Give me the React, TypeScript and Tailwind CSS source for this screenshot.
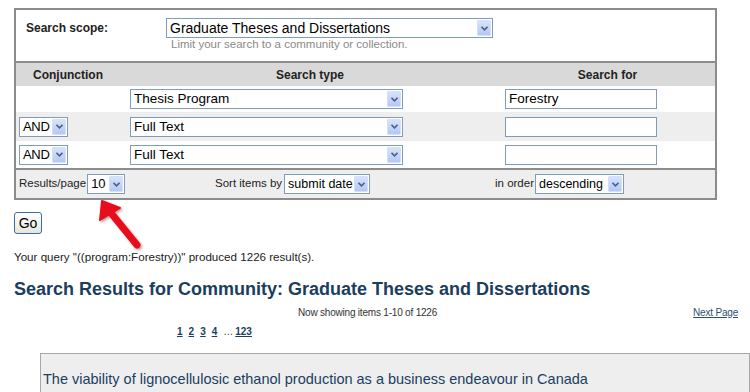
import React from "react";

const font = { fontFamily: '"Liberation Sans", Arial, sans-serif' };

function Select({
  value,
  className,
  text = "text-[13.5px]",
}: {
  value: string;
  className: string;
  text?: string;
}) {
  return (
    <div
      className={`flex h-[20px] items-stretch border border-[#7f9db9] bg-white ${className}`}
    >
      <span
        className={`min-w-0 flex-1 overflow-hidden whitespace-nowrap pl-[3px] leading-[18px] text-black ${text}`}
      >
        {value}
      </span>
      <span className="m-[1px] flex w-[14px] shrink-0 items-center justify-center rounded-[1px] border border-[#d5e0f8] bg-gradient-to-b from-[#d7e3fd] to-[#b4c8f5]">
        <svg width="7" height="5" viewBox="0 0 7 5">
          <path d="M0.5 0.8 L3.5 3.8 L6.5 0.8" fill="none" stroke="#4d6185" strokeWidth="1.6" />
        </svg>
      </span>
    </div>
  );
}

function Input({ value = "" }: { value?: string }) {
  return (
    <div className="h-[20px] w-[152px] border border-[#7f9db9] bg-white pl-[3px] text-[13.5px] leading-[18px] text-black">
      {value}
    </div>
  );
}

export default function App() {
  return (
    <div className="relative h-[392px] w-[750px] overflow-hidden bg-white" style={font}>
      <div className="pl-[14px] pt-[8px]">
        {/* search form */}
        <div className="w-[703px] border-2 border-[#8c8c8c]">
          <div className="flex h-[51px] items-start">
            <span className="w-[150px] pl-[10px] pt-[9px] text-[12px] font-bold text-[#222]">
              Search scope:
            </span>
            <div className="pt-[8px]">
              <Select value="Graduate Theses and Dissertations" className="w-[327px]" text="text-[14px]" />
              <p className="pl-[5px] text-[11.5px] leading-[13px] text-[#8a8a8a]">
                Limit your search to a community or collection.
              </p>
            </div>
          </div>
          <div className="flex h-[25px] items-center border-t-2 border-[#8c8c8c] bg-[#d9d9d9] text-[12px] font-bold text-[#222]">
            <span className="w-[104px] text-center">Conjunction</span>
            <span className="w-[380px] text-center">Search type</span>
            <span className="flex-1 text-center">Search for</span>
          </div>
          <div className="flex h-[26px] items-center bg-white">
            <span className="w-[114px]" />
            <Select value="Thesis Program" className="w-[273px]" />
            <span className="w-[102px]" />
            <Input value="Forestry" />
          </div>
          <div className="flex h-[29px] items-center bg-[#eeeeee]">
            <span className="w-[114px] pl-[3px]">
              <Select value="AND" className="w-[49px]" text="text-[13px] tracking-[-0.3px]" />
            </span>
            <Select value="Full Text" className="w-[273px]" />
            <span className="w-[102px]" />
            <Input />
          </div>
          <div className="flex h-[27px] items-center bg-white">
            <span className="w-[114px] pl-[3px]">
              <Select value="AND" className="w-[49px]" text="text-[13px] tracking-[-0.3px]" />
            </span>
            <Select value="Full Text" className="w-[273px]" />
            <span className="w-[102px]" />
            <Input />
          </div>
          <div className="flex h-[30px] items-center border-t-2 border-[#8c8c8c] bg-[#eeeeee] text-[11.5px] text-[#222]">
            <span className="flex w-[199px] items-center pl-[3px]">
              Results/page
              <Select value="10" className="ml-[1px] w-[38px]" text="text-[13px]" />
            </span>
            <span className="flex w-[280px] items-center">
              Sort items by
              <Select value="submit date" className="ml-[2px] w-[86px]" text="text-[12.5px]" />
            </span>
            <span className="flex items-center">
              in order
              <Select value="descending" className="ml-[1px] w-[89px]" text="text-[12.5px]" />
            </span>
          </div>
        </div>

        <button className="mt-[12px] h-[22px] w-[28px] rounded-[3px] border border-[#3b6e9e] bg-gradient-to-b from-white to-[#e6e6e0] text-[14px] leading-[18px] text-black">
          Go
        </button>

        <p className="mt-[15px] text-[11.6px] leading-[13px] text-[#222]">
          Your query "((program:Forestry))" produced 1226 result(s).
        </p>

        <h1 className="mt-[16px] text-[18px] font-bold leading-[20px] text-[#1b3e5e]">
          Search Results for Community: Graduate Theses and Dissertations
        </h1>
      </div>

      <div className="mt-[7px] flex items-center text-[10px] leading-[13px] tracking-[-0.2px] text-[#333]">
        <span className="w-[298px]" />
        <span>Now showing items 1-10 of 1226</span>
        <a className="ml-auto mr-[12px] text-[#2f4f6f] underline">Next Page</a>
      </div>

      <div className="mt-[7px] flex gap-[6px] pl-[177px] text-[10px] font-bold leading-[12px] text-[#1b3e5e]">
        <a className="underline">1</a>
        <a className="underline">2</a>
        <a className="underline">3</a>
        <a className="underline">4</a>
        <span className="font-normal">…</span>
        <a className="-ml-[4px] underline">123</a>
      </div>

      <div className="ml-[40px] mt-[15px] h-[60px] border border-[#a8a8a8] bg-[#eeeeee] pl-[2px] pt-[17px]">
        <p className="text-[14.5px] leading-[16px] text-[#1b3e5e]">
          The viability of lignocellulosic ethanol production as a business endeavour in Canada
        </p>
      </div>

      {/* red annotation arrow */}
      <svg
        className="absolute left-[88px] top-[192px]"
        width="64"
        height="66"
        viewBox="88 192 64 66"
      >
        <defs>
          <filter id="sh" x="-30%" y="-30%" width="160%" height="160%">
            <feDropShadow dx="1.5" dy="1.5" stdDeviation="1.2" floodColor="#000" floodOpacity="0.35" />
          </filter>
        </defs>
        <g filter="url(#sh)">
          <line x1="137" y1="245" x2="111" y2="213" stroke="#e8101a" strokeWidth="7" strokeLinecap="round" />
          <polygon points="102,201 100,220 120,208" fill="#e8101a" strokeLinejoin="round" stroke="#e8101a" strokeWidth="2" />
        </g>
      </svg>
    </div>
  );
}
